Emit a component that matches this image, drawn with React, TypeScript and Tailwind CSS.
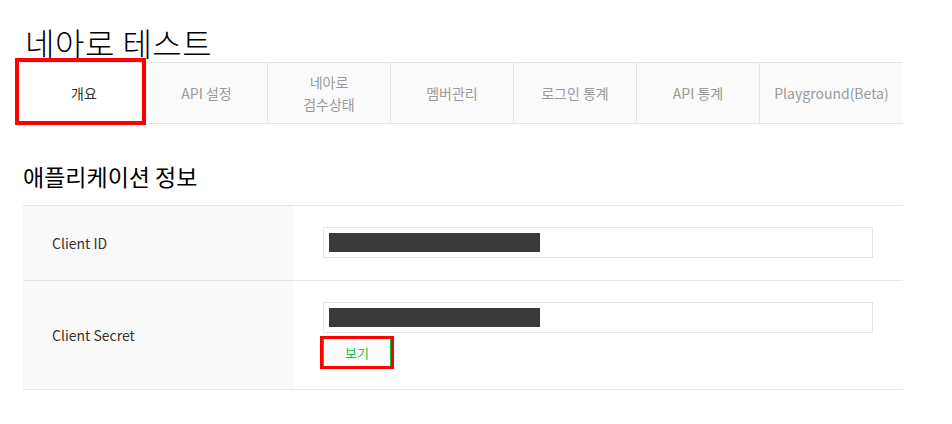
import React from 'react';

const FONT = '[font-family:"Noto_Sans_CJK_KR","Noto_Sans",sans-serif]';

const TABS: { label: React.ReactNode; w: string; active?: boolean }[] = [
  { label: '개요', w: 'w-[123px]', active: true },
  { label: 'API 설정', w: 'w-[122px]' },
  {
    label: (
      <>
        네아로
        <br />
        검수상태
      </>
    ),
    w: 'w-[123px]',
  },
  { label: '멤버관리', w: 'w-[123px]' },
  { label: '로그인 통계', w: 'w-[123px]' },
  { label: 'API 통계', w: 'w-[123px]' },
  { label: 'Playground(Beta)', w: 'flex-1' },
];

/** Masked value: an input box with a dark bar covering the secret. */
function MaskedField() {
  return (
    <div className="h-[31px] w-[550px] border border-[#e5e5e5] bg-white pl-[5px] pt-[5px]">
      <div className="h-[19px] w-[211px] bg-[#3b3a38]" />
    </div>
  );
}

export default function App() {
  return (
    <div className={`${FONT} min-h-[424px] w-[952px] bg-white px-[23px] text-[#222]`}>
      <h1 className="pt-[22px] pl-[2px] text-[32px] leading-[40px] font-light tracking-[0.5px] text-black">
        네아로 테스트
      </h1>

      {/* Tab bar */}
      <div className="relative flex h-[62px] w-[880px] border-y border-[#e5e5e5] bg-[#fafafa]">
        {TABS.map((t, i) => (
          <div
            key={i}
            className={`${t.w} flex items-center justify-center text-center text-[14px] leading-[22px] ${
              i < TABS.length - 1 ? 'border-r border-[#e5e5e5]' : ''
            } ${t.active ? 'bg-white text-[#333]' : 'text-[#999]'}`}
          >
            <span>{t.label}</span>
          </div>
        ))}
        {/* highlight marker */}
        <div className="pointer-events-none absolute left-[-8px] top-[-5px] h-[67px] w-[131px] border-4 border-[#ff0000]" />
      </div>

      <h2 className="mt-[35px] text-[23px] leading-[34px] font-normal text-black">
        애플리케이션 정보
      </h2>

      {/* Info table */}
      <div className="mt-[12px] w-[880px] border-t border-[#e5e5e5] text-[14px] text-[#333]">
        <div className="flex h-[75px] border-b border-[#e5e5e5]">
          <div className="flex w-[270px] items-center bg-[#f9f9f9] pl-[29px]">Client ID</div>
          <div className="pl-[30px] pt-[21px]">
            <MaskedField />
          </div>
        </div>
        <div className="flex h-[109px] border-b border-[#e5e5e5]">
          <div className="flex w-[270px] items-center bg-[#f9f9f9] pl-[29px]">Client Secret</div>
          <div className="pl-[30px] pt-[21px]">
            <MaskedField />
            <div className="relative mt-[6px] h-[27px] w-[68px]">
              <button
                type="button"
                className="h-full w-full border-x border-[#00c73c] bg-[#fcfcfc] text-[13px] leading-[27px] text-[#00c73c]"
              >
                보기
              </button>
              <div className="pointer-events-none absolute left-[-3px] top-[-3px] h-[33px] w-[74px] border-[3px] border-[#ff0000]" />
            </div>
          </div>
        </div>
      </div>
    </div>
  );
}
